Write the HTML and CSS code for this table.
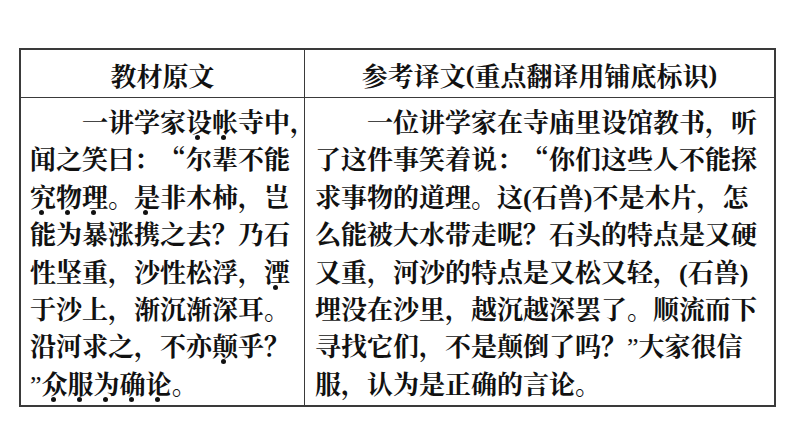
FILE: index.html
```html
<!DOCTYPE html>
<html lang="zh-CN">
<head>
<meta charset="utf-8">
<title>教材原文与参考译文</title>
<link rel="stylesheet" href="styles.css">
</head>
<body>
<div class="page">
  <div class="table">
    <div class="cell head left">教材原文</div>
    <div class="cell head right">参考译文<span class="lat">(</span>重点翻译用铺底标识<span class="lat">)</span></div>
    <div class="cell body left">
      <p class="para">一讲学家<span class="d">设</span><span class="d">帐</span>寺中，<br>闻之笑曰：“尔辈不能<br><span class="d">究</span><span class="d">物</span><span class="d">理</span>。<span class="d">是</span>非木柿，岂<br>能为暴涨携之去？乃石<br>性坚重，沙性松浮，<span class="d">湮</span><br>于沙上，渐沉渐深耳。<br>沿河求之，不亦<span class="d">颠</span>乎？<br><span class="lat q">”</span><span class="d">众</span><span class="d">服</span><span class="d">为</span><span class="d">确</span><span class="d">论</span>。</p>
    </div>
    <div class="cell body right">
      <p class="para">一位讲学家在寺庙里设馆教书，听<br>了这件事笑着说：“你们这些人不能探<br>求事物的道理。这<span class="lat">(</span>石兽<span class="lat">)</span>不是木片，怎<br>么能被大水带走呢？石头的特点是又硬<br>又重，河沙的特点是又松又轻，<span class="lat">(</span>石兽<span class="lat">)</span><br>埋没在沙里，越沉越深罢了。顺流而下<br>寻找它们，不是颠倒了吗？<span class="lat q">”</span>大家很信<br>服，认为是正确的言论。</p>
    </div>
  </div>
</div>
</body>
</html>
```
FILE: styles.css
```css
html, body {
  margin: 0;
  padding: 0;
  background: #ffffff;
}
.page {
  width: 794px;
  height: 447px;
  padding: 48px 0 0 19px;
  box-sizing: border-box;
}
.table {
  width: 757px;
  display: grid;
  grid-template-columns: 284px 1fr;
  grid-template-rows: 48px auto;
  border: 2px solid #3a3a3a;
  box-sizing: border-box;
  font-family: "Noto Serif CJK SC", "Noto Sans CJK SC", serif;
  font-weight: 700;
  color: #111111;
  font-size: 26px;
}
.cell {
  box-sizing: border-box;
}
.cell.left {
  border-right: 1px solid #3a3a3a;
}
.head {
  border-bottom: 1px solid #3a3a3a;
  display: flex;
  align-items: center;
  justify-content: center;
  font-size: 26px;
  line-height: 1;
  padding-top: 2px;
}
.body.left {
  padding: 4px 0 4px 9px;
}
.body.right {
  padding: 4px 0 4px 10px;
}
.para {
  margin: 0;
  line-height: 37.4px;
  text-indent: 2em;
  white-space: nowrap;
}
.lat {
  font-family: "Liberation Serif", serif;
  font-weight: bold;
  line-height: 1;
}
.q {
  font-weight: normal;
}
.d {
  position: relative;
}
.d::after {
  content: "";
  position: absolute;
  left: 36%;
  bottom: -1px;
  width: 5px;
  height: 5px;
  border-radius: 50%;
  background: #111111;
}
```
